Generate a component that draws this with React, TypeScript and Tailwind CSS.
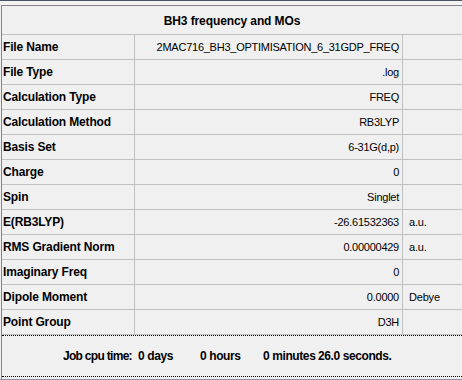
import React from "react";

type Row = { label: string; value: string; unit?: string };

const rows: Row[] = [
  { label: "File Name", value: "2MAC716_BH3_OPTIMISATION_6_31GDP_FREQ" },
  { label: "File Type", value: ".log" },
  { label: "Calculation Type", value: "FREQ" },
  { label: "Calculation Method", value: "RB3LYP" },
  { label: "Basis Set", value: "6-31G(d,p)" },
  { label: "Charge", value: "0" },
  { label: "Spin", value: "Singlet" },
  { label: "E(RB3LYP)", value: "-26.61532363", unit: "a.u." },
  { label: "RMS Gradient Norm", value: "0.00000429", unit: "a.u." },
  { label: "Imaginary Freq", value: "0" },
  { label: "Dipole Moment", value: "0.0000", unit: "Debye" },
  { label: "Point Group", value: "D3H" },
];

const font = { fontFamily: '"Liberation Sans", Arial, sans-serif' };

export default function App() {
  return (
    <div
      className="w-[462px] h-[380px] bg-[#f0f0f0] flex flex-col overflow-hidden text-black"
      style={font}
    >
      {/* window frame strip */}
      <div className="h-px bg-[#4b5363] shrink-0" />
      <div className="h-[4px] bg-[#f3f3f3] shrink-0" />

      <div className="flex-1 ml-px border-t border-l border-[#82858a] flex flex-col">
        {/* title */}
        <div className="h-[29px] shrink-0 border-b border-[#c0c0c0] flex items-center justify-center text-[12px] font-bold tracking-[-0.1px] pt-[2px]">
          BH3 frequency and MOs
        </div>

        {/* properties grid */}
        {rows.map((r) => (
          <div
            key={r.label}
            className="h-[25px] shrink-0 border-b border-[#c0c0c0] flex"
          >
            <div className="w-[133px] shrink-0 border-r border-[#c0c0c0] flex items-center pl-px text-[12px] font-bold tracking-[-0.15px]">
              {r.label}
            </div>
            <div className="w-[268px] shrink-0 border-r border-[#c0c0c0] flex items-center justify-end pr-[3px] text-[11px] tracking-[-0.25px]">
              {r.value}
            </div>
            <div className="flex-1 flex items-center pl-[6px] text-[11px] tracking-[-0.2px]">
              {r.unit ?? ""}
            </div>
          </div>
        ))}

        {/* cpu time footer */}
        <div className="h-[42px] shrink-0 border-t border-b border-dotted border-black flex items-center pl-[61px] text-[12px] font-bold tracking-[-0.4px] whitespace-nowrap">
          <span className="w-[75px] shrink-0 tracking-[-0.7px]">Job cpu time:</span>
          <span className="w-[62px] shrink-0">0 days</span>
          <span className="w-[63px] shrink-0">0 hours</span>
          <span className="w-[55px] shrink-0">0 minutes</span>
          <span>26.0 seconds.</span>
        </div>
        <div className="h-[2px] shrink-0" />
      </div>
      <div className="h-px bg-[#8e93a8] shrink-0" />
    </div>
  );
}
